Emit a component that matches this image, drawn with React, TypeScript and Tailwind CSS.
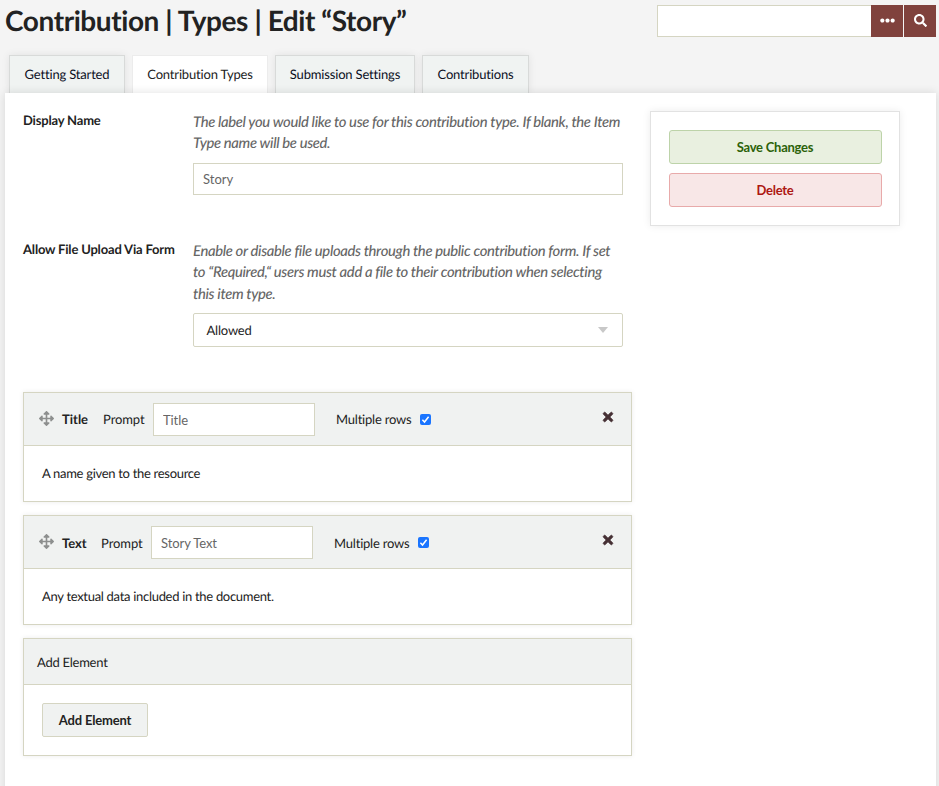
import type { ReactNode } from "react";
import { FaArrowsAlt, FaEllipsisH, FaSearch, FaTimes } from "react-icons/fa";

const tabs = [
  { label: "Getting Started", width: "w-[116px]" },
  { label: "Contribution Types", width: "w-[136px]", active: true },
  { label: "Submission Settings", width: "w-[140px]" },
  { label: "Contributions", width: "w-[107px]" },
];

const elements = [
  { name: "Title", prompt: "Title", description: "A name given to the resource", offset: "pt-[2px]", inputOffset: "pt-px", gap: "ml-[15px]" },
  { name: "Text", prompt: "Story Text", description: "Any textual data included in the document.", offset: "pt-[3px]", inputOffset: "pt-[2px]", gap: "ml-[14.4px]" },
];

function Checkbox() {
  return (
    <span className="flex h-[11px] w-[11px] items-center justify-center rounded-[2px] bg-[#1a75ff]">
      <svg viewBox="0 0 11 11" className="h-[11px] w-[11px]" fill="none" stroke="white" strokeWidth="1.5">
        <path d="M2.4 5.8 4.5 8 8.6 2.7" />
      </svg>
    </span>
  );
}

function Field({ label, help, children, className }: { label: string; help: string; children: ReactNode; className: string }) {
  return (
    <div className={`flex ${className}`}>
      <div className="w-[170px] shrink-0 pt-[9px] font-bold leading-[18px] tracking-[-0.18px] whitespace-nowrap">{label}</div>
      <div className="w-[430px]">
        <p className="-mb-[0.6px] h-fit pt-[9.6px] font-['Lato_Medium','Lato',sans-serif] text-[14.8px] leading-[21.5px] font-medium tracking-[-0.34px] text-[#666] italic">{help}</p>
        {children}
      </div>
    </div>
  );
}

export default function App() {
  return (
    <div className="h-[786px] w-[939px] overflow-hidden bg-[#f4f4f4] font-['Lato',sans-serif] text-[13px] text-[#222] [text-rendering:geometricPrecision]">
      <header className="flex h-[55px] justify-between pr-[3px] pl-[5px]">
        <h1 className="pt-[3px] text-[28px] leading-[34px] font-bold tracking-[-0.42px] whitespace-nowrap">Contribution | Types | Edit “Story”</h1>
        <div className="mt-[5px] flex h-8">
          <input className="w-[214px] border border-r-0 border-[#d5d5c2] bg-white" aria-label="Search" />
          <button className="flex w-8 items-center justify-center bg-[#80423d] text-white">
            <FaEllipsisH className="mb-[1px] h-[15px] w-[15px]" />
          </button>
          <button className="ml-px flex w-8 items-center justify-center bg-[#80423d] text-white">
            <FaSearch className="mb-[2px] h-[13px] w-[13px]" />
          </button>
        </div>
      </header>

      <nav className="flex h-[38px] gap-[7px] pl-[9px] leading-[37px]">
        {tabs.map((tab) => (
          <a
            key={tab.label}
            className={`${tab.width} border border-b-0 text-center tracking-[-0.17px] whitespace-nowrap ${
              tab.active
                ? "relative border-[#ececec] bg-white"
                : "border-[#d8dad9] bg-[#f0f3f2] text-[#0b0f1e] shadow-[0_0_8px_rgba(0,0,0,0.08)]"
            }`}
          >
            {tab.label}
          </a>
        ))}
      </nav>

      <main className="mr-[3px] ml-[5px] flex h-[720px] bg-white pl-[18px] shadow-[0_0_9px_rgba(0,0,0,0.12)] [clip-path:inset(-8px_-8px_0_-8px)]">
        <div className="w-[609px] shrink-0 pt-[9px]">
          <Field
            label="Display Name"
            className="h-[129px]"
            help="The label you would like to use for this contribution type. If blank, the Item Type name will be used."
          >
            <input defaultValue="Story" className="mt-[9px] block h-8 w-[430px] border border-[#d5d5c2] bg-white px-[9px] text-[#666]" />
          </Field>
          <Field
            label="Allow File Upload Via Form"
            className="h-[161px]"
            help="Enable or disable file uploads through the public contribution form. If set to “Required,“ users must add a file to their contribution when selecting this item type."
          >
            <div className="mt-2 flex h-[34px] items-center justify-between rounded-[2px] border border-[#d5d5c2] bg-white pt-[2px] pr-[14px] pl-[12.5px] tracking-[-0.2px]">
              Allowed
              <svg viewBox="0 0 10 6" className="mb-px h-[6px] w-[10px]"><path d="M0 0H10L5 6Z" fill="#c8c8c8" /></svg>
            </div>
          </Field>

          <ul className="space-y-[13px]">
            {elements.map((el) => (
              <li key={el.name} className="h-[110px] border border-[#d5d5c2] bg-white shadow-[0_0_5px_rgba(0,0,0,0.08)]">
                <div className="flex h-[53px] items-center border-b border-[#d5d5c2] bg-[#f0f2f1] pr-4 pl-[15px]">
                  <FaArrowsAlt className="mb-[2px] h-[15px] w-[15px] text-[#8d8f8e]" />
                  <b className={`ml-2 ${el.offset}`}>{el.name}</b>
                  <span className={`${el.gap} ${el.offset} tracking-[-0.1px]`}>Prompt</span>
                  <input defaultValue={el.prompt} className={`ml-[8.5px] h-[33px] w-[162px] border border-[#d5d5c2] bg-white px-[9px] tracking-[-0.1px] text-[#666] ${el.inputOffset}`} />
                  <span className={`mr-[9px] ml-[21px] tracking-[-0.22px] ${el.offset}`}>Multiple rows</span>
                  <Checkbox />
                  <FaTimes className="mb-[4px] ml-auto h-[14px] w-[14px] text-[#453034]" stroke="currentColor" strokeWidth="28" />
                </div>
                <p className="pl-[18px] leading-[55px] tracking-[-0.3px]">{el.description}</p>
              </li>
            ))}
            <li className="h-[118px] border border-[#d5d5c2] bg-white shadow-[0_0_5px_rgba(0,0,0,0.08)]">
              <div className="h-[46px] border-b border-[#d5d5c2] bg-[#f0f2f1] pl-[13px] leading-[46px] tracking-[-0.25px]">Add Element</div>
              <button className="mt-[18px] ml-[18px] h-[34px] w-[106px] rounded-[2px] border border-[#d5d5c2] bg-[#f0f2f1] pt-[2px] font-bold tracking-[-0.17px]">
                Add Element
              </button>
            </li>
          </ul>
        </div>

        <aside className="mt-[18px] ml-[18px] flex h-[115px] w-[250px] flex-col gap-[9px] border border-[#e2e2e2] pr-[17px] pl-[18px] pt-[18px] font-bold tracking-[-0.24px] shadow-[0_0_8px_rgba(0,0,0,0.08)]">
          <button className="h-[34px] rounded-[3px] border border-[#bdd3a9] bg-[#e9f0e0] pt-[2px] pr-px text-[#2c6209]">Save Changes</button>
          <button className="h-[34px] rounded-[3px] border border-[#e8aaaa] bg-[#f8e7e7] pt-[2px] pr-px text-[#ad1712]">Delete</button>
        </aside>
      </main>
    </div>
  );
}
